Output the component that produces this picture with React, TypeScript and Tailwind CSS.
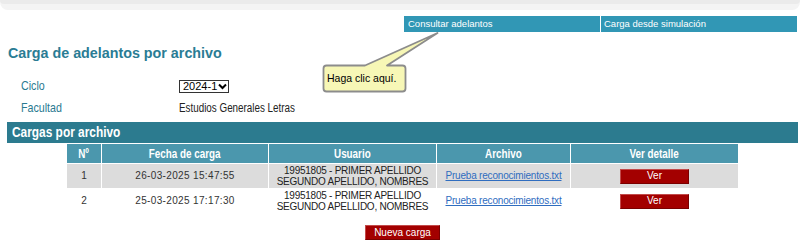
import React from "react";

const SANS = "font-['Liberation_Sans',Arial,sans-serif]";

const ROWS = [
  { n: 1, fecha: "26-03-2025 15:47:55", alt: true },
  { n: 2, fecha: "25-03-2025 17:17:30", alt: false },
];

// Arial Narrow is not installed, so condense Liberation Sans horizontally
function Narrow({ children, center = false }: { children: React.ReactNode; center?: boolean }) {
  return (
    <span className={`inline-block whitespace-nowrap scale-x-[0.82] ${center ? "origin-center" : "origin-left"}`}>
      {children}
    </span>
  );
}

function Tooltip() {
  return (
    <div className="absolute left-[320px] top-[30px] h-[66px] w-[122px]">
      <svg width="122" height="66" viewBox="0 0 122 66" className="absolute left-0 top-0">
        <path
          d="M 6.5 35.5 H 45 L 117.5 3 L 67 35.5 H 82.5 Q 85.5 35.5 85.5 38.5 V 58.5 Q 85.5 61.5 82.5 61.5 H 6.5 Q 3.5 61.5 3.5 58.5 V 38.5 Q 3.5 35.5 6.5 35.5 Z"
          fill="#f7f7b6"
          stroke="#8c8c8c"
          strokeWidth="1.8"
          strokeLinejoin="round"
        />
      </svg>
      <span className="absolute left-[7px] top-[42px] text-[10.5px] leading-[12px] text-black">
        Haga clic aquí.
      </span>
    </div>
  );
}

function RedButton({ label, width }: { label: string; width: string }) {
  return (
    <button
      className={`mx-auto flex h-[15px] ${width} items-center justify-center border border-t-[#c24a4a] border-l-[#c24a4a] border-r-[#7a0000] border-b-[#7a0000] bg-[#a30000] text-[10px] leading-none text-white`}
    >
      {label}
    </button>
  );
}

export default function App() {
  return (
    <div className={`relative h-[245px] w-[805px] overflow-hidden bg-white ${SANS}`}>
      <div className="h-[10px] w-[800px] rounded-b-[8px] bg-[#f4f4f4]">
        <div className="h-[4px] rounded-b-[6px] bg-[#ebebeb]" />
      </div>

      <nav className="mt-[6px] flex justify-end gap-px pr-[8px] text-[9.5px] leading-[16px] text-white">
        <a className="h-[16px] w-[196px] bg-[#3197b5] pl-[4px]">Consultar adelantos</a>
        <a className="h-[16px] w-[196px] bg-[#3197b5] pl-[3px]">Carga desde simulación</a>
      </nav>

      <h1 className="mt-[13px] pl-[8px] text-[14.3px] font-bold leading-[17px] text-[#2a7c94]">
        Carga de adelantos por archivo
      </h1>

      <div className="mt-[13px] grid grid-cols-[158px_auto] pl-[21px]">
        <div className="flex h-[22px] items-center text-[13px] text-[#2a7a91]">
          <Narrow>Ciclo</Narrow>
        </div>
        <div className="flex h-[22px] items-center">
          <div className="flex h-[13px] w-[50px] items-center border border-[#333] pl-[3px] text-[11px] leading-none text-black">
            2024-1
            <svg width="9" height="7" viewBox="0 0 9 7" className="ml-[1px]">
              <path d="M1 1.5 L4.5 5 L8 1.5" fill="none" stroke="#000" strokeWidth="2" />
            </svg>
          </div>
        </div>
        <div className="flex h-[22px] items-center text-[13px] text-[#2a7a91]">
          <Narrow>Facultad</Narrow>
        </div>
        <div className="flex h-[22px] items-center text-[12px] text-[#222]">
          <Narrow>Estudios Generales Letras</Narrow>
        </div>
      </div>

      <div className="mx-[7px] mt-[3px] w-[791px]">
        <div className="h-[21px] bg-[#2c7b8f] pl-[5px] text-[14.5px] font-bold leading-[21px] text-white">
          <Narrow>Cargas por archivo</Narrow>
        </div>
        <table className="mx-auto border-separate border-spacing-px">
          <thead>
            <tr className="h-[19px] bg-[#4b97ad] text-[12px] font-bold text-white">
              <th className="w-[34px] p-0"><Narrow center>Nº</Narrow></th>
              <th className="w-[166px] p-0"><Narrow center>Fecha de carga</Narrow></th>
              <th className="w-[167px] p-0"><Narrow center>Usuario</Narrow></th>
              <th className="w-[133px] p-0"><Narrow center>Archivo</Narrow></th>
              <th className="w-[167px] p-0"><Narrow center>Ver detalle</Narrow></th>
            </tr>
          </thead>
          <tbody className="text-[10px] leading-[11.5px] text-[#333]">
            {ROWS.map((r) => (
              <tr key={r.n} className={`h-[24px] ${r.alt ? "bg-[#dcdcdc]" : "bg-white"}`}>
                <td className="p-0 text-center">{r.n}</td>
                <td className="p-0 text-center tracking-[0.35px]">{r.fecha}</td>
                <td className="p-0 text-center tracking-[-0.25px] text-[#222]">
                  19951805 - PRIMER APELLIDO
                  <br />
                  SEGUNDO APELLIDO, NOMBRES
                </td>
                <td className="p-0 text-center tracking-[-0.2px]">
                  <a className="text-[#2f6dbf] underline">Prueba reconocimientos.txt</a>
                </td>
                <td className="p-0">
                  <RedButton label="Ver" width="w-[69px]" />
                </td>
              </tr>
            ))}
          </tbody>
        </table>
        <div className="mt-[11px] flex justify-center">
          <RedButton label="Nueva carga" width="w-[75px]" />
        </div>
      </div>

      <Tooltip />
    </div>
  );
}
